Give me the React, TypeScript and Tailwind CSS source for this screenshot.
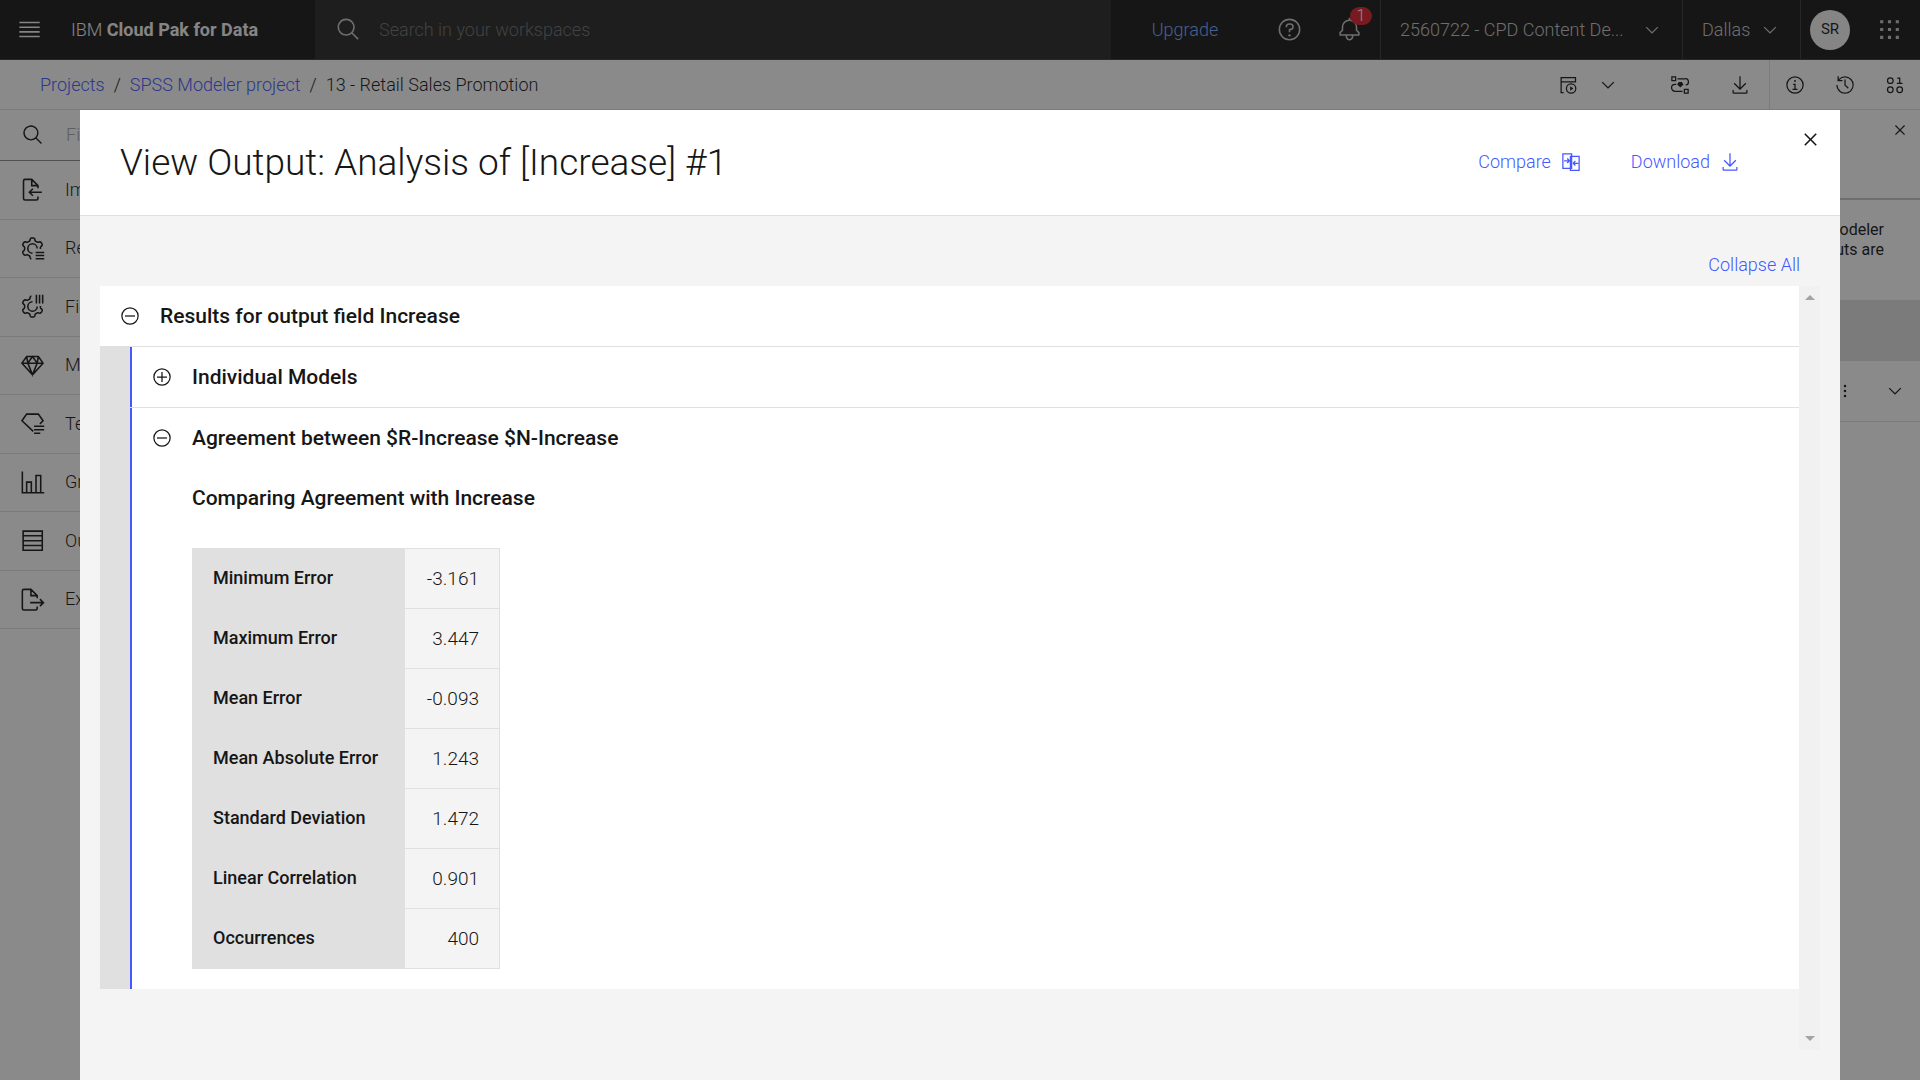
import type { ReactNode } from "react";

type IconProps = { className?: string; children: ReactNode };

// filled glyph on the 32px grid
function Glyph({ className = "size-5", children }: IconProps) {
  return (
    <svg viewBox="0 0 32 32" fill="currentColor" aria-hidden="true" className={`shrink-0 ${className}`}>
      {children}
    </svg>
  );
}

// outlined glyph on the same grid
function Outline({ className = "size-5", children }: IconProps) {
  return (
    <svg
      viewBox="0 0 32 32"
      fill="none"
      stroke="currentColor"
      strokeWidth="2"
      aria-hidden="true"
      className={`shrink-0 ${className}`}
    >
      {children}
    </svg>
  );
}

function SearchIcon({ className }: { className?: string }) {
  return (
    <Glyph className={className}>
      <path d="M29,27.5859l-7.5521-7.5521a11.0177,11.0177,0,1,0-1.4141,1.4141L27.5859,29ZM4,13a9,9,0,1,1,9,9A9.01,9.01,0,0,1,4,13Z" />
    </Glyph>
  );
}

function CloseIcon({ className }: { className?: string }) {
  return (
    <Glyph className={className}>
      <path d="M24 9.4L22.6 8 16 14.6 9.4 8 8 9.4 14.6 16 8 22.6 9.4 24 16 17.4 22.6 24 24 22.6 17.4 16 24 9.4z" />
    </Glyph>
  );
}

function ChevronIcon() {
  return (
    <Glyph>
      <path d="M16 22L6 12 7.4 10.6 16 19.2 24.6 10.6 26 12z" />
    </Glyph>
  );
}

function DownloadIcon() {
  return (
    <Glyph>
      <path d="M26 24v4H6V24H4v4a2 2 0 002 2H26a2 2 0 002-2V24zM26 14l-1.41-1.41L17 20.17V2H15V20.17L7.41 12.59 6 14 16 24 26 14z" />
    </Glyph>
  );
}

function ToggleIcon({ open }: { open: boolean }) {
  return (
    <Outline>
      <circle cx="16" cy="16" r="13" />
      <path d={open ? "M8 16h16" : "M8 16h16M16 8v16"} />
    </Outline>
  );
}

// points along a six-toothed gear outline, angles in degrees
function gear(from: number, to: number) {
  const points: string[] = [];
  for (let deg = from; deg <= to; deg += 3) {
    const a = (deg * Math.PI) / 180;
    const r = 11.8 - 1.7 * Math.tanh(2.5 * Math.cos(6 * a));
    points.push(`${(16 + r * Math.cos(a)).toFixed(2)},${(16 + r * Math.sin(a)).toFixed(2)}`);
  }
  return points.join(" ");
}

const palette = [
  {
    label: "Import",
    icon: (
      <path d="M23 25v2.5a2 2 0 0 1-2 2H6.5a2 2 0 0 1-2-2V5a2 2 0 0 1 2-2H15l8 8v3.5M15 3v8h8M28 19.5H12M16.5 15 12 19.5l4.5 4.5" />
    ),
  },
  {
    label: "Record",
    icon: (
      <>
        <polyline points={gear(96, 363)} strokeLinejoin="round" />
        <path d="M16 22a6 6 0 1 1 6-6M20 21h11M20 25h11M20 29h11" />
      </>
    ),
  },
  {
    label: "Field",
    icon: (
      <>
        <polyline points={gear(-3, 264)} strokeLinejoin="round" />
        <path d="M16 10a6 6 0 1 0 6 6M21 1v11M25 1v11M29 1v11" />
      </>
    ),
  },
  {
    label: "Model",
    icon: <path d="M8.5 4.5h15L29.5 13 16 28 2.5 13zM2.5 13h27M16 4.5 10 13l6 15 6-15zM8.5 4.5 10 13M23.5 4.5 22 13" />,
  },
  {
    label: "Text",
    icon: <path d="M17 26 2.5 12.5 8.5 4h15l6 8.5-4 4M18 19.5h13M18 24h13M18 28.5h8" />,
  },
  {
    label: "Graphs",
    icon: <path d="M3 2v27h28M8.5 29V15.5h6V29M20.5 29V7h6v22" />,
  },
  {
    label: "Outputs",
    icon: <path d="M4 4h24.5v24.5H4zM4 10h24.5M4 16.2h24.5M4 22.4h24.5" />,
  },
  {
    label: "Export",
    icon: (
      <path d="M22 25v2.5a2 2 0 0 1-2 2H5a2 2 0 0 1-2-2V5a2 2 0 0 1 2-2h9l8 8v3.5M14 3v8h8M13 20h17M25.5 15.5 30 20l-4.5 4.5" />
    ),
  },
];

const results = [
  { name: "Minimum Error", value: "-3.161" },
  { name: "Maximum Error", value: "3.447" },
  { name: "Mean Error", value: "-0.093" },
  { name: "Mean Absolute Error", value: "1.243" },
  { name: "Standard Deviation", value: "1.472" },
  { name: "Linear Correlation", value: "0.901" },
  { name: "Occurrences", value: "400" },
];

function Header() {
  return (
    <header className="flex h-[60px] border-b border-[#393939] bg-[#161616] text-[#c6c6c6]">
      <div className="flex w-[315px] items-center text-[#f4f4f4]">
        <button aria-label="Menu" className="flex w-[59px] justify-center">
          <Outline className="size-[25px]">
            <path d="M3 7h26M3 13h26M3 19h26M3 25h26" />
          </Outline>
        </button>
        <a href="#home" className="ml-3 text-lg">
          IBM <span className="font-bold">Cloud Pak for Data</span>
        </a>
      </div>
      <label className="flex flex-1 items-center gap-[18px] bg-[#262626] pl-[21px]">
        <SearchIcon className="size-[25px]" />
        <input
          type="search"
          aria-label="Search in your workspaces"
          placeholder="Search in your workspaces"
          className="flex-1 bg-transparent text-lg outline-none placeholder:text-[#6f6f6f]"
        />
      </label>
      <div className="flex items-stretch">
        <a href="#upgrade" className="flex w-[148px] items-center justify-center text-lg text-[#78a9ff]">
          Upgrade
        </a>
        <button aria-label="Help" className="flex w-[60px] items-center justify-center">
          <Glyph className="size-[25px]">
            <path d="M16,2A14,14,0,1,0,30,16,14,14,0,0,0,16,2Zm0,26A12,12,0,1,1,28,16,12,12,0,0,1,16,28Z" />
            <circle cx="16" cy="23.5" r="1.5" />
            <path d="M17,8H15.5A4.49,4.49,0,0,0,11,12.5V13h2v-.5A2.5,2.5,0,0,1,15.5,10H17a2.5,2.5,0,0,1,0,5H15v4.5h2V17a4.5,4.5,0,0,0,0-9Z" />
          </Glyph>
        </button>
        <button aria-label="Notifications" className="relative flex w-[61px] items-center justify-center">
          <Glyph className="size-[25px]">
            <path d="M28.7071,19.293,26,16.5859V13a10.0136,10.0136,0,0,0-9-9.9492V1H15V3.0508A10.0136,10.0136,0,0,0,6,13v3.5859L3.2929,19.293A1,1,0,0,0,3,20v3a1,1,0,0,0,1,1h7v.7768a5.152,5.152,0,0,0,4.5,5.1987A5.0057,5.0057,0,0,0,21,25V24h7a1,1,0,0,0,1-1V20A1,1,0,0,0,28.7071,19.293ZM19,25a3,3,0,0,1-6,0V24h6Zm8-3H5V20.4141L7.707,17.707A1,1,0,0,0,8,17V13a8,8,0,0,1,16,0v4a1,1,0,0,0,.293.707L27,20.4141Z" />
          </Glyph>
          <span className="absolute top-[7px] right-2 flex h-[18px] w-[22px] items-center justify-center rounded-[9px] bg-[#da1e28] text-base text-white">
            1
          </span>
        </button>
        <button className="flex w-[302px] items-center gap-[14px] border-l border-[#393939] pl-[19px] text-left text-lg">
          <span className="w-[228px] whitespace-nowrap">2560722 - CPD Content De...</span>
          <ChevronIcon />
        </button>
        <button className="flex w-[118px] items-center justify-between border-l border-[#393939] pr-5 pl-[19px] text-lg">
          Dallas
          <ChevronIcon />
        </button>
        <div className="flex w-[59px] items-center justify-center border-l border-[#393939]">
          <button className="flex size-10 items-center justify-center rounded-full bg-[#f4f4f4] text-[15px] font-normal text-[#161616]">
            SR
          </button>
        </div>
        <button aria-label="App switcher" className="mr-px flex w-[60px] items-center justify-center">
          <Glyph className="size-[25px]">
            <path d="M4 4h4v4H4zM14 4h4v4h-4zM24 4h4v4h-4zM4 14h4v4H4zM14 14h4v4h-4zM24 14h4v4h-4zM4 24h4v4H4zM14 24h4v4h-4zM24 24h4v4h-4z" />
          </Glyph>
        </button>
      </div>
    </header>
  );
}

function Toolbar() {
  return (
    <div className="flex h-[50px] justify-between border-b border-[#e0e0e0]">
      <nav aria-label="Breadcrumb" className="flex items-center gap-[9px] pl-10 text-lg">
        <a href="#projects" className="text-[#4558ff]">Projects</a>
        <span>/</span>
        <a href="#project" className="text-[#4558ff]">SPSS Modeler project</a>
        <span>/</span>
        <span>13 - Retail Sales Promotion</span>
      </nav>
      <div className="flex items-stretch">
        <button aria-label="Run" className="flex w-10 items-center justify-center">
          <Outline>
            <path d="M9 28H5V4h23v7H5" />
            <circle cx="21" cy="21.5" r="7.5" />
            <path d="M19.5 18v7l5-3.5z" fill="currentColor" stroke="none" />
          </Outline>
        </button>
        <button aria-label="Run options" className="mr-[22px] flex w-10 items-center justify-center">
          <ChevronIcon />
        </button>
        <button aria-label="Flow" className="flex w-[60px] items-center justify-center">
          <Outline>
            <path d="M3 3h6v6H3zM23 23h6v6h-6zM12 6h12a5 5 0 0 1 1 10M10 15H8a5.5 5.5 0 0 0 0 11h12" />
            <path d="M14 11h5l2.5 4-5 5-5-5z" fill="currentColor" stroke="none" />
          </Outline>
        </button>
        <button aria-label="Download flow" className="flex w-[59px] items-center justify-center">
          <DownloadIcon />
        </button>
        <button aria-label="Information" className="flex w-[51px] items-center justify-center border-l border-[#e0e0e0]">
          <Glyph>
            <path d="M16,2A14,14,0,1,0,30,16,14,14,0,0,0,16,2Zm0,26A12,12,0,1,1,28,16,12,12,0,0,1,16,28Z" />
            <path d="M17 22L17 14 13 14 13 16 15 16 15 22 12 22 12 24 20 24 20 22 17 22z" />
            <circle cx="16" cy="9.5" r="1.5" />
          </Glyph>
        </button>
        <button aria-label="History" className="flex w-[50px] items-center justify-center">
          <Glyph>
            <path d="M20.59 22 15 16.41 15 7 17 7 17 15.58 22 20.59 20.59 22z" />
            <path d="M16,2A13.94,13.94,0,0,0,6,6.23V2H4v8h8V8H7.08A12,12,0,1,1,4,16H2A14,14,0,1,0,16,2Z" />
          </Glyph>
        </button>
        <button aria-label="Data" className="flex w-[50px] items-center justify-center">
          <Outline>
            <circle cx="8.5" cy="9" r="4.5" />
            <circle cx="8.5" cy="23.5" r="4.5" />
            <circle cx="23.5" cy="23.5" r="4.5" />
            <path d="M19.5 5h4v8.5M19 13.5h9" />
          </Outline>
        </button>
      </div>
    </div>
  );
}

function Palette() {
  return (
    <aside className="w-[300px]">
      <label className="flex h-[51px] items-center gap-[22px] border-b border-[#8d8d8d] pl-[22px]">
        <SearchIcon className="size-[22px]" />
        <input
          type="search"
          aria-label="Find"
          placeholder="Find"
          className="w-40 bg-transparent text-lg outline-none placeholder:text-[#a8a8a8]"
        />
      </label>
      <ul className="flex h-[468px] flex-col">
        {palette.map((item) => (
          <li key={item.label} className="flex-1 border-b border-[#e0e0e0]">
            <button className="flex h-full w-full items-center gap-5 pl-5 text-lg">
              <Outline className="size-[25px]">{item.icon}</Outline>
              {item.label}
            </button>
          </li>
        ))}
      </ul>
    </aside>
  );
}

function OutputsPanel() {
  return (
    <aside className="w-[400px]">
      <div className="flex h-[90px] justify-end border-b-2 border-[#c6c6c6] pt-[10px] pr-[10px]">
        <button aria-label="Close panel" className="size-5">
          <CloseIcon />
        </button>
      </div>
      <p className="h-[100px] pt-5 pr-9 text-right text-base leading-5 font-normal">
        Modeler
        <br />
        outputs are
      </p>
      <div className="h-[61px] bg-[#e0e0e0]" />
      <div className="flex h-[61px] items-center justify-end gap-[30px] border-b border-[#e0e0e0] pr-[15px]">
        <button aria-label="Output options">
          <Glyph>
            <circle cx="16" cy="8" r="2" />
            <circle cx="16" cy="16" r="2" />
            <circle cx="16" cy="24" r="2" />
          </Glyph>
        </button>
        <button aria-label="Expand output">
          <ChevronIcon />
        </button>
      </div>
    </aside>
  );
}

function ResultsTable() {
  return (
    <table className="border-collapse text-[19px] leading-7 font-light">
      <tbody>
        {results.map((row) => (
          <tr key={row.name} className="h-[60px]">
            <th
              scope="row"
              className="w-[212px] border border-[#e0e0e0] bg-[#e0e0e0] pr-4 pb-[2px] pl-5 text-left text-lg font-medium"
            >
              {row.name}
            </th>
            <td className="w-[95px] border border-[#e0e0e0] bg-[#f4f4f4] pr-5 text-right">{row.value}</td>
          </tr>
        ))}
      </tbody>
    </table>
  );
}

function OutputDialog() {
  return (
    <section
      role="dialog"
      aria-label="View Output"
      className="fixed inset-x-20 top-[110px] bottom-0 flex flex-col bg-[#f4f4f4]"
    >
      <div className="flex h-[106px] shrink-0 border-b border-[#e0e0e0] bg-white pl-10">
        <h1 className="flex-1 self-center text-[37px]">View Output: Analysis of [Increase] #1</h1>
        <div className="flex items-center gap-[50px] pb-[2px] text-lg text-[#4558ff]">
          <button className="flex items-center gap-[10px]">
            Compare
            <Outline>
              <path d="M3 3h14v23H3zM15 7h14v22.5H15z" />
              <path d="M5 14h8M10 10.5l3.5 3.5-3.5 3.5M28 18h-8M23 14.5 19.5 18l3.5 3.5" />
            </Outline>
          </button>
          <button className="flex items-center gap-[10px]">
            Download
            <DownloadIcon />
          </button>
        </div>
        <button aria-label="Close" className="mt-[17px] mr-[17px] ml-[58px] size-[25px]">
          <CloseIcon className="size-[25px]" />
        </button>
      </div>

      <div className="flex min-h-0 flex-1 flex-col px-5 pb-[30px]">
        <div className="flex h-[70px] items-end justify-end pr-5 pb-[7px]">
          <button className="text-lg text-[#4558ff]">Collapse All</button>
        </div>
        <div className="flex min-h-0 flex-1">
          <div className="flex-1 text-[21px] leading-7 font-medium">
            <button className="flex h-[61px] w-full items-center gap-5 border-b border-[#e0e0e0] bg-white pl-5">
              <ToggleIcon open />
              Results for output field Increase
            </button>
            <div className="bg-[#e0e0e0] pl-[30px]">
              <div className="border-b border-[#e0e0e0]">
                <button className="flex h-[60px] w-full items-center gap-5 border-l-2 border-[#4558ff] bg-white pl-5">
                  <ToggleIcon open={false} />
                  Individual Models
                </button>
              </div>
              <div className="border-l-2 border-[#4558ff] bg-white pb-5">
                <button className="flex h-[60px] w-full items-center gap-5 pl-5">
                  <ToggleIcon open />
                  Agreement between $R-Increase $N-Increase
                </button>
                <div className="pl-[60px]">
                  <h2 className="h-20 pt-4">Comparing Agreement with Increase</h2>
                  <ResultsTable />
                </div>
              </div>
            </div>
          </div>
          <div className="flex w-[21px] flex-col items-center justify-between bg-[#f1f1f1] py-[9px] text-[#a3a3a3]">
            <svg viewBox="0 0 10 5" className="h-[5px] w-[10px]" fill="currentColor">
              <path d="M0 5 5 0l5 5z" />
            </svg>
            <svg viewBox="0 0 10 5" className="h-[5px] w-[10px]" fill="currentColor">
              <path d="M0 0h10L5 5z" />
            </svg>
          </div>
        </div>
      </div>
    </section>
  );
}

export default function App() {
  return (
    <div className="min-h-screen overflow-hidden bg-white font-[Roboto,sans-serif] font-light text-[#161616]">
      <Header />
      <Toolbar />
      <main className="flex justify-between">
        <Palette />
        <OutputsPanel />
      </main>
      <div className="fixed inset-0 bg-[#161616]/50" />
      <OutputDialog />
    </div>
  );
}
